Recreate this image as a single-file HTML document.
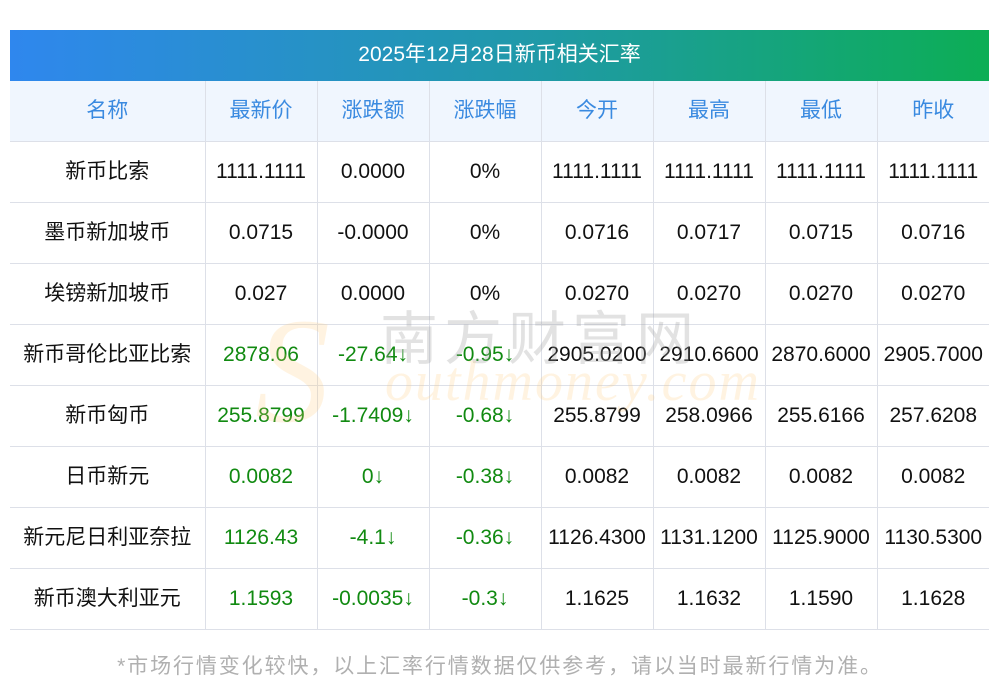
<!DOCTYPE html>
<html><head><meta charset="utf-8"><style>
body{margin:0;background:#fff;width:1000px;height:697px;position:relative;overflow:hidden;font-family:"Liberation Sans","Noto Sans CJK SC",sans-serif;}
.title{position:absolute;left:10px;top:30px;width:979px;height:51px;background:linear-gradient(90deg,#2f87ee,#1f9aa6 55%,#0cae55);color:#fff;font-size:21px;line-height:49px;text-align:center;}
table{position:absolute;left:10px;top:81px;border-collapse:collapse;table-layout:fixed;width:979px;}
td,th{border:1px solid #dde0e8;text-align:center;font-size:21px;color:#111;height:60px;padding:0;white-space:nowrap;font-weight:normal;line-height:22px;}
th{padding-bottom:1px;height:59px;}
td:first-child{padding-bottom:1px;height:59px;}
tr:first-child th{border-top:none;}
th{background:#f0f6fe;color:#3a8ae0;}
td:first-child,th:first-child{border-left:none;}
td:last-child,th:last-child{border-right:none;}
.g{color:#118a11;}
.foot{position:absolute;top:650px;left:0;width:1000px;text-align:center;color:#b0b0b0;font-size:21px;letter-spacing:1.9px;}
.wm1{position:absolute;left:380px;top:292px;font-size:58px;color:rgba(160,160,160,0.3);letter-spacing:6px;}
.wm2{position:absolute;left:385px;top:350px;font-size:56px;font-style:italic;font-family:"Liberation Serif",serif;color:rgba(255,200,120,0.22);letter-spacing:2px;}
.wm3{position:absolute;left:255px;top:285px;font-size:150px;font-style:italic;font-family:"Liberation Serif",serif;color:rgba(255,200,120,0.22);}
</style></head><body>
<div class="title">2025年12月28日新币相关汇率</div>
<table>
<colgroup><col style="width:195px"><col style="width:112px"><col style="width:112px"><col style="width:112px"><col style="width:112px"><col style="width:112px"><col style="width:112px"><col style="width:112px"></colgroup>
<tr><th>名称</th><th>最新价</th><th>涨跌额</th><th>涨跌幅</th><th>今开</th><th>最高</th><th>最低</th><th>昨收</th></tr>
<tr><td>新币比索</td><td>1111.1111</td><td>0.0000</td><td>0%</td><td>1111.1111</td><td>1111.1111</td><td>1111.1111</td><td>1111.1111</td></tr>
<tr><td>墨币新加坡币</td><td>0.0715</td><td>-0.0000</td><td>0%</td><td>0.0716</td><td>0.0717</td><td>0.0715</td><td>0.0716</td></tr>
<tr><td>埃镑新加坡币</td><td>0.027</td><td>0.0000</td><td>0%</td><td>0.0270</td><td>0.0270</td><td>0.0270</td><td>0.0270</td></tr>
<tr><td>新币哥伦比亚比索</td><td class="g">2878.06</td><td class="g">-27.64↓</td><td class="g">-0.95↓</td><td>2905.0200</td><td>2910.6600</td><td>2870.6000</td><td>2905.7000</td></tr>
<tr><td>新币匈币</td><td class="g">255.8799</td><td class="g">-1.7409↓</td><td class="g">-0.68↓</td><td>255.8799</td><td>258.0966</td><td>255.6166</td><td>257.6208</td></tr>
<tr><td>日币新元</td><td class="g">0.0082</td><td class="g">0↓</td><td class="g">-0.38↓</td><td>0.0082</td><td>0.0082</td><td>0.0082</td><td>0.0082</td></tr>
<tr><td>新元尼日利亚奈拉</td><td class="g">1126.43</td><td class="g">-4.1↓</td><td class="g">-0.36↓</td><td>1126.4300</td><td>1131.1200</td><td>1125.9000</td><td>1130.5300</td></tr>
<tr><td>新币澳大利亚元</td><td class="g">1.1593</td><td class="g">-0.0035↓</td><td class="g">-0.3↓</td><td>1.1625</td><td>1.1632</td><td>1.1590</td><td>1.1628</td></tr>
</table>
<div class="wm3">S</div>
<div class="wm1">南方财富网</div>
<div class="wm2">outhmoney.com</div>
<div class="foot">*市场行情变化较快，以上汇率行情数据仅供参考，请以当时最新行情为准。</div>
</body></html>
